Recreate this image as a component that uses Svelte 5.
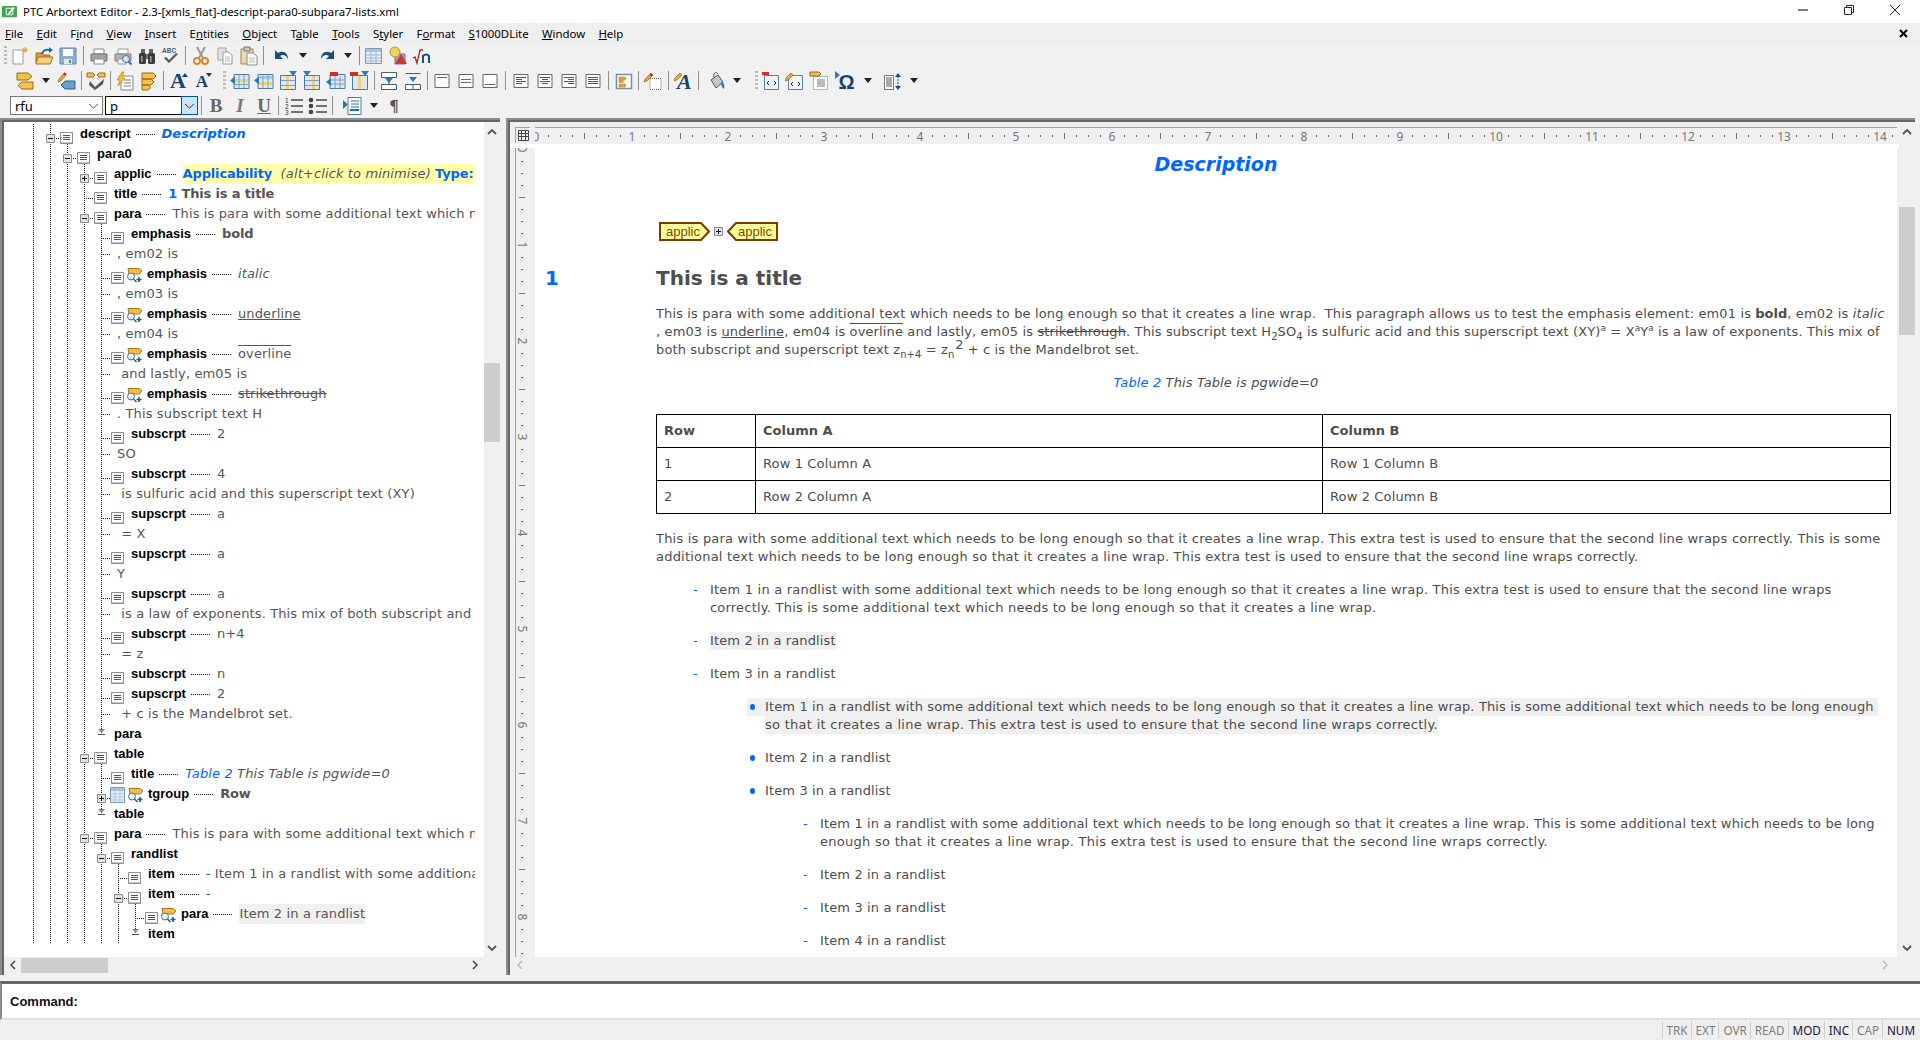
<script>
	// Arbortext Editor main window: document map on the left, edit view on the right
	const menus = [
		['F', 'ile'], ['E', 'dit'], ['Fi', 'nd', 'n'], ['V', 'iew'], ['I', 'nsert'], ['En', 'tities', 't'], ['O', 'bject'],
		['Ta', 'ble', 'b'], ['T', 'ools'], ['St', 'yler', 'y'], ['Fo', 'rmat', 'r'], ['S', '1000DLite'], ['W', 'indow'], ['H', 'elp']
	];

	const blue = 'blu';
	const tree = [
		{ l: 0, n: 'descript', e: 'm', v: [['Description', 'blu bi']] },
		{ l: 1, n: 'para0', e: 'm' },
		{ l: 2, n: 'applic', e: 'p', hi: true, v: [['Applicability', 'blu b'], ['  ', ''], ['(alt+click to minimise)', 'i'], [' ', ''], ['Type:', 'blu b']] },
		{ l: 2, n: 'title', v: [['1', 'blu b'], [' ', 'b'], ['This is a title', 'b']] },
		{ l: 2, n: 'para', e: 'm', v: [['This is para with some additional text which needs', '']] },
		{ l: 3, n: 'emphasis', v: [['bold', 'b']] },
		{ l: 3, t: ', em02 is' },
		{ l: 3, n: 'emphasis', tag: true, v: [['italic', 'i']] },
		{ l: 3, t: ', em03 is' },
		{ l: 3, n: 'emphasis', tag: true, v: [['underline', 'un']] },
		{ l: 3, t: ', em04 is' },
		{ l: 3, n: 'emphasis', tag: true, v: [['overline', 'ov']] },
		{ l: 3, t: ' and lastly, em05 is' },
		{ l: 3, n: 'emphasis', tag: true, v: [['strikethrough', 'st']] },
		{ l: 3, t: '. This subscript text H' },
		{ l: 3, n: 'subscrpt', v: [['2', '']] },
		{ l: 3, t: 'SO' },
		{ l: 3, n: 'subscrpt', v: [['4', '']] },
		{ l: 3, t: ' is sulfuric acid and this superscript text (XY)' },
		{ l: 3, n: 'supscrpt', v: [['a', '']] },
		{ l: 3, t: ' = X' },
		{ l: 3, n: 'supscrpt', v: [['a', '']] },
		{ l: 3, t: 'Y' },
		{ l: 3, n: 'supscrpt', v: [['a', '']] },
		{ l: 3, t: ' is a law of exponents. This mix of both subscript and' },
		{ l: 3, n: 'subscrpt', v: [['n+4', '']] },
		{ l: 3, t: ' = z' },
		{ l: 3, n: 'subscrpt', v: [['n', '']] },
		{ l: 3, n: 'supscrpt', v: [['2', '']] },
		{ l: 3, t: ' + c is the Mandelbrot set.' },
		{ l: 2, end: 'para' },
		{ l: 2, n: 'table', e: 'm' },
		{ l: 3, n: 'title', v: [['Table 2', 'blu i'], [' ', ''], ['This Table is pgwide=0', 'i']] },
		{ l: 3, n: 'tgroup', e: 'p', tbl: true, tag: true, v: [['Row', 'b']] },
		{ l: 2, end: 'table' },
		{ l: 2, n: 'para', e: 'm', v: [['This is para with some additional text which needs', '']] },
		{ l: 3, n: 'randlist', e: 'm' },
		{ l: 4, n: 'item', v: [['-', blue], [' Item 1 in a randlist with some additional text', '']] },
		{ l: 4, n: 'item', e: 'm', v: [['-', blue]] },
		{ l: 5, n: 'para', tag: true, v: [['Item 2 in a randlist', 'sel']] },
		{ l: 4, end: 'item' }
	];

	const status = [['TRK', 0], ['EXT', 0], ['OVR', 0], ['READ', 0], ['MOD', 1], ['INC', 1], ['CAP', 0], ['NUM', 1]];

	// eighth-inch ticks, 96px to the inch
	const hticks = Array.from({ length: 114 }, (_, k) => k);
	const vticks = Array.from({ length: 68 }, (_, k) => k);
</script>

{#snippet ico(name)}
	<svg class="ico" viewBox="0 0 20 20"><use href="#{name}" /></svg>
{/snippet}

{#snippet btn(name)}
	<span class="btn">{@render ico(name)}</span>
{/snippet}

{#snippet drop()}
	<span class="drop"><i></i></span>
{/snippet}

<svg class="defs" aria-hidden="true">
	<symbol id="new" viewBox="0 0 20 20"><path d="M3 4h10v14H3z" fill="#fff" stroke="#9a9a9a" /><path d="M4 17h9v1H4z" fill="#ccc" /><path d="M15 1v6M12 4h6M13 2l4 4M17 2l-4 4" stroke="#f39c1f" /></symbol>
	<symbol id="open" viewBox="0 0 20 20"><path d="M2 7h6l1 2h7v8H2z" fill="#d99a3a" stroke="#a8701c" /><path d="M4 11h15l-3 7H2z" fill="#f6cf7e" stroke="#a8701c" /><path d="M8 8c1-4 4-5 8-4" fill="none" stroke="#1e6aa6" stroke-width="2" /><path d="M15 1l4 3-4 3z" fill="#1e6aa6" /></symbol>
	<symbol id="save" viewBox="0 0 20 20"><path d="M2 2h16v16H2z" fill="#8badd6" stroke="#6585ad" /><path d="M5 3h10v7H5z" fill="#fff" /><path d="M6 13h8v5H6z" fill="#e3e8ee" /><path d="M11 14h2v3h-2z" fill="#55789f" /></symbol>
	<symbol id="print" viewBox="0 0 20 20"><path d="M5 3h10v5H5z" fill="#fff" stroke="#888" /><path d="M2 8h16v7H2z" fill="#a4a4a4" stroke="#6e6e6e" /><path d="M5 13h10v5H5z" fill="#fff" stroke="#888" /><path d="M15 10h2v1h-2z" fill="#3cb371" /></symbol>
	<symbol id="preview" viewBox="0 0 20 20"><path d="M5 3h10v5H5z" fill="#fff" stroke="#999" /><path d="M2 8h16v7H2z" fill="#b3b3b3" stroke="#808080" /><path d="M5 13h8v5H5z" fill="#fff" stroke="#999" /><circle cx="13" cy="13" r="3.500" fill="#d6e9f5" stroke="#4a6f8f" /><path d="M15.500 15.500l3 3" stroke="#4a6f8f" stroke-width="2" /></symbol>
	<symbol id="binoc" viewBox="0 0 20 20"><path d="M4 3h4v5H4zM12 3h4v5h-4z" fill="#5f5f5f" /><rect x="2" y="7" width="7" height="11" rx="1.500" fill="#3c3c3c" /><rect x="11" y="7" width="7" height="11" rx="1.500" fill="#3c3c3c" /><path d="M9 8h2v5H9z" fill="#777" /><path d="M4 10h1.500v6H4zM13 10h1.500v6H13z" fill="#a0a0a0" /></symbol>
	<symbol id="spell" viewBox="0 0 20 20"><text x="1" y="7" class="abc">ABC</text><path d="M3 12l5 5 9-9-2-1-7 7-3-3z" fill="#555" /></symbol>
	<symbol id="cut" viewBox="0 0 20 20"><path d="M6 1l6 11M14 1L8 12" stroke="#9a9a9a" stroke-width="2" /><circle cx="6" cy="15" r="3" fill="none" stroke="#d98a2b" stroke-width="2" /><circle cx="14" cy="15" r="3" fill="none" stroke="#d98a2b" stroke-width="2" /></symbol>
	<symbol id="copy" viewBox="0 0 20 20"><path d="M3 2h8v12H3z" fill="#e3e3e3" stroke="#a3a3a3" /><path d="M8 6h6l3 3v9H8z" fill="#fff" stroke="#9a9a9a" /><path d="M10 11h5M10 13h5M10 15h5" stroke="#bbb" /></symbol>
	<symbol id="paste" viewBox="0 0 20 20"><path d="M2 3h12v15H2z" fill="#eed7a8" stroke="#a28451" /><path d="M5 1h6v4H5z" fill="#c9c9c9" stroke="#777" /><path d="M8 7h6l4 3v9H8z" fill="#fff" stroke="#8a8a8a" /><path d="M10 12h6M10 14h6M10 16h6" stroke="#bbb" /></symbol>
	<symbol id="undo" viewBox="0 0 20 20"><path d="M3 4v9h8L8 10c3-2 6-1 8 3 0-6-5-9-10-6z" fill="#17507f" /></symbol>
	<symbol id="redo" viewBox="0 0 20 20"><path d="M17 4v9H9l3-3c-3-2-6-1-8 3 0-6 5-9 10-6z" fill="#17507f" /></symbol>
	<symbol id="table" viewBox="0 0 20 20"><path d="M1.500 2.500h16v15h-16z" fill="#e6eef7" stroke="#7a9ac0" /><path d="M2 3h15v3H2z" fill="#a9c3e0" /><path d="M2 9h15M2 12h15M2 15h15M7 6v11M12 6v11" stroke="#9fb7d3" /></symbol>
	<symbol id="obj" viewBox="0 0 20 20"><path d="M7 8h10v10H7z" fill="#a69ad0" stroke="#7d6fae" /><circle cx="7" cy="6" r="5" fill="#f3d25c" stroke="#b8942a" /><path d="M13 8l6 10H7z" fill="#cc3a2a" /></symbol>
	<symbol id="math" viewBox="0 0 20 20"><path d="M1 12l2-1 2 6 3-13h3" fill="none" stroke="#b3261e" stroke-width="1.300" /><path d="M11 9v8M11 10c2-2 6-2 6 1v6" fill="none" stroke="#17507f" stroke-width="2" /></symbol>

	<symbol id="tags" viewBox="0 0 20 20"><path d="M2 2h11l4 3.500-4 3.500H2z" fill="#f3c14f" stroke="#9a6a12" /><path d="M18 11H7l-4 3.500 4 3.500h11z" fill="#f3c14f" stroke="#9a6a12" /></symbol>
	<symbol id="tagedit" viewBox="0 0 20 20"><path d="M2 8l5-6 2 2-5 6-3 1z" fill="#e8a33d" stroke="#8a5a12" stroke-width=".6" /><path d="M7 2l2 2" stroke="#c22" stroke-width="2" /><path d="M18 10H8l-4 4 4 4h10z" fill="#6d9ecb" stroke="#2f5f8d" /></symbol>
	<symbol id="tagcheck" viewBox="0 0 20 20"><path d="M1 2h6l2 2-2 2H1zM19 2h-6l-2 2 2 2h6z" fill="#f3c14f" stroke="#9a6a12" /><path d="M4 10l5 6 9-8-1 5-8 6-6-5z" fill="#555" /></symbol>
	<symbol id="note" viewBox="0 0 20 20"><path d="M6 5h12v14H6z" fill="#fff" stroke="#888" /><path d="M9 9h7M9 12h7M9 15h7" stroke="#777" /><path d="M7 1L2 9h3l-2 6 7-8H7l2-6z" fill="#f6c22a" stroke="#a37a12" stroke-width=".6" /></symbol>
	<symbol id="tagorder" viewBox="0 0 20 20"><path d="M3 2h11l3 3-3 3H3zM3 8h9l3 3-3 3H3zM3 14h6l3 2.500-3 2.500H3z" fill="#f3c14f" stroke="#9a6a12" /></symbol>
	<symbol id="rowa" viewBox="0 0 20 20"><path d="M4 3.500h15v14H4z" fill="#dbe7f3" stroke="#4f7a9f" /><path d="M5 8h13v3H5z" fill="#f0cf7a" /><path d="M4 13.500h15M9 4v13M14 4v13" stroke="#7fa0bf" /><path d="M0 9.500l5-4v8z" fill="#2a7ab0" /></symbol>
	<symbol id="rowb" viewBox="0 0 20 20"><path d="M4 3.500h15v14H4z" fill="#dbe7f3" stroke="#4f7a9f" /><path d="M5 5h13v3H5z" fill="#a9c8e4" /><path d="M5 11h13v3H5z" fill="#f0cf7a" /><path d="M9 4v13M14 4v13" stroke="#7fa0bf" /><path d="M0 9.500l5-4v8z" fill="#2a7ab0" /></symbol>
	<symbol id="cola" viewBox="0 0 20 20"><path d="M2.500 4.500h15v14h-15z" fill="#dbe7f3" stroke="#4f7a9f" /><path d="M8 5h3v13H8z" fill="#f0cf7a" /><path d="M3 9.500h14M3 14.500h14" stroke="#7fa0bf" /><path d="M11 0h8l-4 5z" fill="#2a7ab0" /></symbol>
	<symbol id="colb" viewBox="0 0 20 20"><path d="M2.500 4.500h15v14h-15z" fill="#dbe7f3" stroke="#4f7a9f" /><path d="M10 5h3v13h-3z" fill="#f0cf7a" /><path d="M3 9.500h14M3 14.500h14" stroke="#7fa0bf" /><path d="M1 0h8L5 5z" fill="#2a7ab0" /></symbol>
	<symbol id="rowdel" viewBox="0 0 20 20"><path d="M4 3.500h15v14H4z" fill="#dbe7f3" stroke="#4f7a9f" /><path d="M4 1h8v4H4z" fill="#d62c20" /><path d="M5 9h13M5 13h13M9 5v12M14 5v12" stroke="#7fa0bf" /><path d="M0 11l5-4v8z" fill="#2a7ab0" /></symbol>
	<symbol id="coldel" viewBox="0 0 20 20"><path d="M2.500 4.500h15v14h-15z" fill="#dbe7f3" stroke="#4f7a9f" /><path d="M0 1h8v4H0z" fill="#d62c20" /><path d="M8 5h3v13H8z" fill="#f0cf7a" /><path d="M11 0h8l-4 5z" fill="#2a7ab0" /></symbol>
	<symbol id="splita" viewBox="0 0 20 20"><path d="M2.500 1.500h15v5h-15zM2.500 13.500h15v5h-15zM10 7v6" fill="#fff" stroke="#4a5f73" /><path d="M6 7h8l-4 5z" fill="#2a7ab0" /></symbol>
	<symbol id="splitb" viewBox="0 0 20 20"><path d="M2.500 2.500h15M2.500 13.500h15v5h-15zM10 13.500v5" fill="#fff" stroke="#4a5f73" /><path d="M6 6h8l-4 5z" fill="#2a7ab0" /></symbol>
	<symbol id="ftop" viewBox="0 0 20 20"><path d="M3 3.500h14v13H3z" fill="#fff" stroke="#666" /><path d="M5 6.500h10" stroke="#666" /></symbol>
	<symbol id="fmid" viewBox="0 0 20 20"><path d="M3 3.500h14v13H3z" fill="#fff" stroke="#666" /><path d="M5 8.500h10M5 11.500h10" stroke="#666" /></symbol>
	<symbol id="fbot" viewBox="0 0 20 20"><path d="M3 3.500h14v13H3z" fill="#fff" stroke="#666" /><path d="M5 13.500h10" stroke="#666" /></symbol>
	<symbol id="al" viewBox="0 0 20 20"><path d="M3 3.500h14v13H3z" fill="#fff" stroke="#666" /><path d="M5 6.500h10M5 8.500h6M5 10.500h10M5 12.500h6" stroke="#555" /></symbol>
	<symbol id="ac" viewBox="0 0 20 20"><path d="M3 3.500h14v13H3z" fill="#fff" stroke="#666" /><path d="M5 6.500h10M7 8.500h6M5 10.500h10M7 12.500h6" stroke="#555" /></symbol>
	<symbol id="ar" viewBox="0 0 20 20"><path d="M3 3.500h14v13H3z" fill="#fff" stroke="#666" /><path d="M5 6.500h10M9 8.500h6M5 10.500h10M9 12.500h6" stroke="#555" /></symbol>
	<symbol id="aj" viewBox="0 0 20 20"><path d="M3 3.500h14v13H3z" fill="#fff" stroke="#666" /><path d="M5 6.500h10M5 8.500h10M5 10.500h10M5 12.500h10" stroke="#555" /></symbol>
	<symbol id="order" viewBox="0 0 20 20"><path d="M2.500 3.500h15v14h-15z" fill="#fff" stroke="#7b8fa5" stroke-width="1.500" /><path d="M5 6h6l1 1.500-1 1.500H5zM5 9.500h4l1 1-1 1H5zM5 13h6l1 1-1 2H5z" fill="#e8a33d" stroke="#a8701c" stroke-width=".5" /></symbol>
	<symbol id="gridpen" viewBox="0 0 20 20"><path d="M7 7.500h11v11H7z" fill="#fff" stroke="#666" stroke-dasharray="1 1" /><path d="M2 8l6-6 2 2-6 6-3 1z" fill="#e8a33d" stroke="#8a5a12" stroke-width=".6" /><path d="M7 3l2 2" stroke="#c22" stroke-width="2" /></symbol>
	<symbol id="bucket" viewBox="0 0 20 20"><path d="M5 9l7-5 5 7-7 6z" fill="#c6c6c6" stroke="#555" /><path d="M8 6c-1-4 2-6 4-3" fill="none" stroke="#555" /><path d="M16 10c2 2 3 5 2 8-2-1-3-4-3-6z" fill="#3d7ca8" /></symbol>
	<symbol id="codedel" viewBox="0 0 20 20"><path d="M3.500 4.500h14v14h-14z" fill="#eef4fa" stroke="#5c7fa3" /><path d="M1 1h7v3H1z" fill="#d62c20" /><path d="M8 10l-2 2 2 2M13 10l2 2-2 2" fill="none" stroke="#222" /></symbol>
	<symbol id="codepen" viewBox="0 0 20 20"><path d="M3.500 4.500h14v14h-14z" fill="#eef4fa" stroke="#5c7fa3" /><path d="M1 7l5-5 2 2-5 5-3 1z" fill="#e8a33d" stroke="#8a5a12" stroke-width=".6" /><path d="M8 11l-2 2 2 2M13 11l2 2-2 2" fill="none" stroke="#222" /></symbol>
	<symbol id="tagbox" viewBox="0 0 20 20"><path d="M4.500 5.500h14v13h-14z" fill="#fff" stroke="#2a8ac0" stroke-dasharray="1 1" /><path d="M1 1h9l2 2-2 2H1z" fill="#f3c14f" stroke="#9a6a12" /><path d="M8 9h8M8 11h8M8 13h8M8 15h8" stroke="#777" /></symbol>
	<symbol id="linesp" viewBox="0 0 20 20"><path d="M1.500 4.500h9v14h-9z" fill="#fff" stroke="#777" /><path d="M3 7h6M3 9h6M3 11h6M3 13h6M3 15h6" stroke="#555" /><path d="M15 2l-3 4h6zM15 19l-3-4h6z" fill="#17507f" /><path d="M15 5v12" stroke="#17507f" stroke-dasharray="2 1" /></symbol>
	<symbol id="numlist" viewBox="0 0 20 20"><text x="1" y="7" class="tiny">1</text><text x="1" y="13" class="tiny">2</text><text x="1" y="19" class="tiny">3</text><path d="M7 4h12M7 10h12M7 16h12" stroke="#4a4a4a" stroke-width="1.600" /></symbol>
	<symbol id="bullist" viewBox="0 0 20 20"><circle cx="3" cy="4" r="2.300" fill="#444" /><circle cx="3" cy="10" r="2.300" fill="#444" /><circle cx="3" cy="16" r="2.300" fill="#444" /><path d="M8 4h11M8 10h11M8 16h11" stroke="#4a4a4a" stroke-width="1.600" /></symbol>
	<symbol id="indent" viewBox="0 0 20 20"><path d="M5 1.500h13v17H5z" fill="#fff" stroke="#4f7a9f" /><path d="M8 5h8M8 8h8M8 11h8" stroke="#2a6ea6" /><path d="M7 14h9" stroke="#2a6ea6" stroke-width="2" /><path d="M0 4l5 4.500-5 4.500z" fill="#2a7ab0" /></symbol>

	<symbol id="node" viewBox="0 0 13 12"><path d="M.5.500h12v11H.5z" fill="#fff" stroke="#8f8f8f" /><path d="M1 10h11v1H1z" fill="#c4c4c4" /><path d="M3 3.500h7M3 5.500h7M3 7.500h7" stroke="#2d5a8c" /></symbol>
	<symbol id="tagmag" viewBox="0 0 16 15"><path d="M2 .500h11l3 2.500-3 3H3z" fill="#f2bd4e" stroke="#a87418" /><circle cx="5" cy="8.500" r="3.500" fill="#e6eff6" stroke="#5a6f82" /><path d="M7.500 11l3 3" stroke="#4a5a68" stroke-width="1.500" /><path d="M13 9v5M10.500 11.500h5" stroke="#1c5a96" stroke-width="1.600" /></symbol>
	<symbol id="tblnode" viewBox="0 0 15 16"><path d="M.5.500h14v15H.5z" fill="#e6eef7" stroke="#7a9ac0" /><path d="M1 1h13v3H1z" fill="#a9c3e0" /><path d="M1 7h13M1 10h13M1 13h13M5 4v11M10 4v11" stroke="#b3c7de" /></symbol>
	<symbol id="expm" viewBox="0 0 9 9"><path d="M.5.500h8v8h-8z" fill="#e2e2e2" stroke="#8c8c8c" /><path d="M2 4.500h5" stroke="#111" /></symbol>
	<symbol id="expp" viewBox="0 0 9 9"><path d="M.5.500h8v8h-8z" fill="#e2e2e2" stroke="#8c8c8c" /><path d="M2 4.500h5M4.500 2v5" stroke="#111" /></symbol>
	<symbol id="endmark" viewBox="0 0 9 20"><path d="M4.500 0v9" stroke="#222" stroke-dasharray="1 1" /><path d="M1 5h7L4.500 9z" fill="#888" /><path d="M1 10.500h7" stroke="#555" /></symbol>
</svg>

<div class="app">
	<header class="titlebar">
		<svg class="appicon" viewBox="0 0 16 16"><path d="M1 2h14l1 1v10l-1 1H1l-1-1V3z" fill="#3da84a" /><path d="M4.500 4.500h7v7h-7z" fill="none" stroke="#fff" /><path d="M7 9l5-6 1.500 1.500-5 6-2 .5z" fill="#fff" /></svg>
		<span class="wintitle">PTC Arbortext Editor - 2.3-[xmls_flat]-descript-para0-subpara7-lists.xml</span>
		<div class="winbtns">
			<span class="winbtn"><svg width="12" height="12" viewBox="0 0 12 12"><path d="M1 6h10" stroke="#000" /></svg></span>
			<span class="winbtn"><svg width="12" height="12" viewBox="0 0 12 12"><path d="M1.500 3.500h7v7h-7zM3.500 3.500v-2h7v7h-2" fill="none" stroke="#222" /></svg></span>
			<span class="winbtn"><svg width="12" height="12" viewBox="0 0 12 12"><path d="M1 1l10 10M11 1L1 11" stroke="#222" /></svg></span>
		</div>
	</header>

	<nav class="menubar">
		{#each menus as m}
			<span class="menu">{#if m[2]}{m[0].slice(0, -1)}<u>{m[0].slice(-1)}</u>{m[1]}{:else}<u>{m[0]}</u>{m[1]}{/if}</span>
		{/each}
		<svg class="mdiclose" width="9" height="9" viewBox="0 0 9 9"><path d="M1 1l7 7M8 1L1 8" stroke="#000" stroke-width="2" /></svg>
	</nav>

	<div class="toolbars">
		<div class="tb">
			<i class="grip"></i>
			<span class="first1"></span>
			{@render btn('new')}{@render btn('open')}{@render btn('save')}
			<i class="sep"></i>
			{@render btn('print')}{@render btn('preview')}{@render btn('binoc')}{@render btn('spell')}
			<i class="sep narrow"></i>
			{@render btn('cut')}{@render btn('copy')}{@render btn('paste')}
			<i class="sep narrow"></i>
			<span class="pad3"></span>{@render btn('undo')}{@render drop()}<span class="pad3"></span>{@render btn('redo')}{@render drop()}
			<i class="sep tight"></i>
			{@render btn('table')}{@render btn('obj')}{@render btn('math')}
		</div>
		<div class="tb">
			<span class="first2"></span>
			{@render btn('tags')}{@render drop()}{@render btn('tagedit')}
			<i class="sep tight"></i>
			{@render btn('tagcheck')}
			<i class="sep tight"></i>
			{@render btn('note')}{@render btn('tagorder')}
			<i class="sep tight"></i>
			<span class="btn big"><span class="bigA">A</span><i class="up"></i></span>
			<span class="btn big"><span class="smallA">A</span><i class="dn"></i></span>
			<i class="grip mid"></i>
			{@render btn('rowa')}{@render btn('rowb')}{@render btn('cola')}{@render btn('colb')}{@render btn('rowdel')}{@render btn('coldel')}
			<i class="sep tight"></i>
			{@render btn('splita')}{@render btn('splitb')}
			<i class="sep tight"></i>
			{@render btn('ftop')}{@render btn('fmid')}{@render btn('fbot')}
			<i class="sep"></i>
			{@render btn('al')}{@render btn('ac')}{@render btn('ar')}{@render btn('aj')}
			<i class="sep"></i>
			{@render btn('order')}
			<i class="sep tight"></i>
			{@render btn('gridpen')}
			<i class="sep"></i>
			<span class="btn"><svg class="ico" viewBox="0 0 20 20"><path d="M1 7l5-5 2 2-5 5-3 1z" fill="#e8a33d" stroke="#8a5a12" stroke-width=".6" /></svg><span class="scriptA">A</span></span>
			<i class="sep tight"></i>
			<span class="pad3"></span>{@render btn('bucket')}{@render drop()}
			<i class="grip mid2"></i>
			{@render btn('codedel')}{@render btn('codepen')}{@render btn('tagbox')}
			<span class="btn omega"><i class="omtri"></i>Ω</span><span class="drop omdrop"><i></i></span>
			<span class="pad2"></span>{@render btn('linesp')}{@render drop()}
		</div>
		<div class="tb">
			<span class="first3"></span>
			<span class="combo">rfu<svg class="chev" width="11" height="6" viewBox="0 0 11 6"><path d="M1 1l4.500 4L10 1" fill="none" stroke="#555" /></svg></span>
			<span class="combo focus"><span>p</span><span class="combobtn"><svg class="chev" width="11" height="6" viewBox="0 0 11 6"><path d="M1 1l4.500 4L10 1" fill="none" stroke="#333" /></svg></span></span>
			<i class="sep sel-sep"></i>
			<span class="btn fmt bold">B</span><span class="btn fmt ital">I</span><span class="btn fmt under">U</span>
			<i class="sep narrow"></i>
			{@render btn('numlist')}{@render btn('bullist')}
			<i class="sep narrow"></i>
			<span class="pad5"></span>{@render btn('indent')}{@render drop()}
			<span class="btn pil">¶</span>
		</div>
	</div>

	<div class="main">
		<section class="pane left">
			<div class="pane-in">
				<div class="split">
					<div class="tree">
						{#each tree as r}
							<div class="row">
								{#each Array(r.end ? r.l + 2 : r.l + 1) as _}<i class="guide"></i>{/each}
								{#if r.end}
									<svg class="endmark" width="9" height="20"><use href="#endmark" /></svg>
									<span class="name">{r.end}</span>
								{:else if r.t !== undefined}
									<i class="cell textcell"></i>
									<span class="txt">{r.t}</span>
								{:else}
									<span class="cell">
										{#if r.e}<svg class="exp" width="9" height="9"><use href={r.e === 'm' ? '#expm' : '#expp'} /></svg>{/if}
									</span>
									{#if r.tbl}
										<svg class="tblnode" width="15" height="16"><use href="#tblnode" /></svg>
									{:else}
										<svg class="node" width="13" height="12"><use href="#node" /></svg>
									{/if}
									{#if r.tag}<svg class="tagmag" width="16" height="15"><use href="#tagmag" /></svg>{/if}
									<span class="name" class:tagged={r.tag}>{r.n}</span>
									{#if r.v}
										<i class="lead"></i>
										<span class="vals" class:hi={r.hi}>{#each r.v as [text, cls]}<span class={cls}>{text}</span>{/each}</span>
									{/if}
								{/if}
							</div>
						{/each}
					</div>
					<div class="vscroll tree-v">
						<svg class="arrow" width="10" height="6" viewBox="0 0 10 6"><path d="M1 5l4-4 4 4" fill="none" stroke="#555" stroke-width="1.800" /></svg>
						<span class="thumb"></span>
						<svg class="arrow" width="10" height="6" viewBox="0 0 10 6"><path d="M1 1l4 4 4-4" fill="none" stroke="#555" stroke-width="1.800" /></svg>
					</div>
				</div>
				<div class="hscroll">
					<svg class="arrow" width="6" height="10" viewBox="0 0 6 10"><path d="M5 1L1 5l4 4" fill="none" stroke="#444" stroke-width="1.500" /></svg>
					<span class="hthumb"></span>
					<svg class="arrow" width="6" height="10" viewBox="0 0 6 10"><path d="M1 1l4 4-4 4" fill="none" stroke="#444" stroke-width="1.500" /></svg>
				</div>
			</div>
		</section>

		<section class="pane right">
			<div class="pane-in">
				<div class="split">
					<div class="editor">
						<div class="rulerrow">
							<span class="gridbtn"><svg width="13" height="13" viewBox="0 0 13 13"><path d="M1.500 1.500h10v10h-10zM1.500 4.500h10M1.500 7.500h10M4.500 1.500v10M8.500 1.500v10" fill="none" stroke="#444" /></svg></span>
							<svg class="hruler" height="16">
								{#each hticks as k}
									{#if k % 8 === 0}
										<text x={1 + k * 12} y="13" text-anchor="middle" class="rnum">{k / 8}</text>
									{:else if k % 4 === 0}
										<rect x={1 + k * 12} y="5" width="1" height="6" fill="#777" />
									{:else}
										<rect x={1 + k * 12} y="7" width="1" height="2" fill="#666" />
									{/if}
								{/each}
							</svg>
						</div>
						<div class="body">
							<svg class="vruler" width="15">
								{#each vticks as k}
									{#if k % 8 === 0}
										<text transform="translate(2 {1 + k * 12}) rotate(90)" text-anchor="middle" class="rnum">{k / 8}</text>
									{:else if k % 4 === 0}
										<rect x="3" y={1 + k * 12} width="6" height="1" fill="#777" />
									{:else}
										<rect x="5" y={1 + k * 12} width="2" height="1" fill="#666" />
									{/if}
								{/each}
							</svg>
							<article class="doc">
								<h1>Description</h1>
								<div class="applic">
									<svg width="51" height="19" viewBox="0 0 51 19"><path d="M1 1h41l8 8.500-8 8.500H1z" fill="#ffff9c" stroke="#7a3b00" stroke-width="2" /><text x="7" y="14" class="tagtext">applic</text></svg>
									<svg class="tagexp" width="9" height="9"><use href="#expp" /></svg>
									<svg width="51" height="19" viewBox="0 0 51 19"><path d="M50 1H9l-8 8.500L9 18h41z" fill="#ffff9c" stroke="#7a3b00" stroke-width="2" /><text x="11" y="14" class="tagtext">applic</text></svg>
								</div>
								<h2><span class="num">1</span>This is a title</h2>
								<p>This is para with some additional text which needs to be long enough so that it creates a line wrap.&nbsp; This paragraph allows us to test the emphasis element: em01 is <b>bold</b>, em02 is <em>italic</em><br />, em03 is <u>underline</u>, em04 is <span class="ov">overline</span> and lastly, em05 is <s>strikethrough</s>. This subscript text H<sub>2</sub>SO<sub>4</sub> is sulfuric acid and this superscript text (XY)<sup>a</sup> = X<sup>a</sup>Y<sup>a</sup> is a law of exponents. This mix of<br />both subscript and superscript text z<sub>n+4</sub> = z<sub>n</sub><sup class="big2">2</sup> + c is the Mandelbrot set.</p>
								<div class="caption"><span class="capblue">Table 2</span> This Table is pgwide=0</div>
								<table>
									<colgroup><col class="c1" /><col class="c2" /><col /></colgroup>
									<thead><tr><th>Row</th><th>Column A</th><th>Column B</th></tr></thead>
									<tbody>
										<tr><td>1</td><td>Row 1 Column A</td><td>Row 1 Column B</td></tr>
										<tr><td>2</td><td>Row 2 Column A</td><td>Row 2 Column B</td></tr>
									</tbody>
								</table>
								<p class="p2 wide">This is para with some additional text which needs to be long enough so that it creates a line wrap. This extra test is used to ensure that the second line wraps correctly. This is some<br />additional text which needs to be long enough so that it creates a line wrap. This extra test is used to ensure that the second line wraps correctly.</p>

								<div class="item l1"><span class="mk">-</span><div class="wide">Item 1 in a randlist with some additional text which needs to be long enough so that it creates a line wrap. This extra test is used to ensure that the second line wraps<br />correctly. This is some additional text which needs to be long enough so that it creates a line wrap.</div></div>
								<div class="item l1"><span class="mk">-</span><div><span class="selline">Item 2 in a randlist</span></div></div>
								<div class="item l1"><span class="mk">-</span><div>Item 3 in a randlist</div></div>

								<div class="item l2"><span class="mk dot on"><i></i></span><div><span class="selline end">Item 1 in a randlist with some additional text which needs to be long enough so that it creates a line wrap. This is some additional text which needs to be long enough</span><br /><span class="selline wider">so that it creates a line wrap. This extra test is used to ensure that the second line wraps correctly.</span></div></div>
								<div class="item l2"><span class="mk dot"><i></i></span><div>Item 2 in a randlist</div></div>
								<div class="item l2"><span class="mk dot"><i></i></span><div>Item 3 in a randlist</div></div>

								<div class="item l3"><span class="mk">-</span><div>Item 1 in a randlist with some additional text which needs to be long enough so that it creates a line wrap. This is some additional text which needs to be long<br /><span class="wider">enough so that it creates a line wrap. This extra test is used to ensure that the second line wraps correctly.</span></div></div>
								<div class="item l3"><span class="mk">-</span><div>Item 2 in a randlist</div></div>
								<div class="item l3"><span class="mk">-</span><div>Item 3 in a randlist</div></div>
								<div class="item l3"><span class="mk">-</span><div>Item 4 in a randlist</div></div>
							</article>
						</div>
					</div>
					<div class="vscroll doc-v">
						<svg class="arrow" width="10" height="6" viewBox="0 0 10 6"><path d="M1 5l4-4 4 4" fill="none" stroke="#555" stroke-width="1.800" /></svg>
						<span class="thumb"></span>
						<svg class="arrow" width="10" height="6" viewBox="0 0 10 6"><path d="M1 1l4 4 4-4" fill="none" stroke="#555" stroke-width="1.800" /></svg>
					</div>
				</div>
				<div class="hscroll dim">
					<svg class="arrow" width="6" height="10" viewBox="0 0 6 10"><path d="M5 1L1 5l4 4" fill="none" stroke="#bbb" stroke-width="1.500" /></svg>
					<svg class="arrow" width="6" height="10" viewBox="0 0 6 10"><path d="M1 1l4 4-4 4" fill="none" stroke="#bbb" stroke-width="1.500" /></svg>
				</div>
			</div>
		</section>
	</div>

	<div class="command"><b>Command:</b></div>

	<footer class="status">
		{#each status as [label, active]}
			<span class:active>{label}</span>
		{/each}
	</footer>
</div>

<style>
	:global(body) {
		margin: 0;
		overflow: hidden;
	}

	.defs {
		display: block;
		width: 0;
		height: 0;
	}

	.app {
		display: flex;
		flex-direction: column;
		width: 1920px;
		height: 1040px;
		background: #f1f1f1;
		font-family: "Noto Sans", "Open Sans", sans-serif;
		font-size: 11.400px;
		color: #000;
		overflow: hidden;
	}

	.titlebar {
		display: flex;
		align-items: center;
		height: 23px;
		background: #fff;
		flex: none;
	}

	.appicon {
		width: 15px;
		height: 15px;
		margin: 0 6px 0 2px;
	}

	.winbtns {
		display: flex;
		align-self: flex-start;
		margin-left: auto;
		margin-right: 2px;
	}

	.winbtn {
		display: flex;
		align-items: center;
		justify-content: center;
		width: 46px;
		height: 20px;
	}

	.menubar {
		display: flex;
		align-items: center;
		gap: 13.300px;
		height: 20px;
		padding: 0 12px 0 5px;
		background: #efefef;
		flex: none;
	}

	.mdiclose {
		margin-left: auto;
	}

	.toolbars {
		flex: none;
		height: 75px;
	}

	.tb {
		display: flex;
		align-items: center;
		height: 25px;
	}

	.grip {
		width: 3px;
		height: 20px;
		margin-left: 4px;
		background: repeating-linear-gradient(#bbb 0 2px, transparent 2px 4px);
		flex: none;
	}

	.grip.mid { margin: 0 2px 0 9px; }
	.grip.mid2 { margin: 0 1px 0 9px; }

	.first1 { width: 1px; }
	.first2 { width: 13px; }
	.first3 { width: 10px; }
	.pad2 { width: 2px; }
	.pad3 { width: 3px; }
	.pad5 { width: 5px; }

	.btn {
		display: flex;
		align-items: center;
		justify-content: center;
		width: 24px;
		height: 22px;
		flex: none;
		position: relative;
	}

	.ico {
		width: 20px;
		height: 20px;
	}

	.sep {
		width: 1px;
		height: 19px;
		background: #8f8f8f;
		margin: 0 3px;
		flex: none;
	}

	.sep.narrow { margin: 0 3px 0 2px; }
	.sep.tight { margin: 0 2px; }

	.drop {
		display: flex;
		align-items: center;
		justify-content: center;
		width: 18px;
		height: 22px;
		flex: none;
	}

	.drop.omdrop {
		margin-left: -2px;
		margin-right: 2px;
	}

	.drop i {
		border-left: 4.500px solid transparent;
		border-right: 4.500px solid transparent;
		border-top: 5px solid #222;
	}

	.abc {
		font: bold 6.500px "Liberation Sans", sans-serif;
		fill: #3c5c80;
	}

	.tiny {
		font: 6.500px "Liberation Sans", sans-serif;
		fill: #333;
	}

	.bigA, .smallA {
		font-family: "Liberation Serif", serif;
		font-weight: bold;
		color: #17426e;
		line-height: 22px;
	}

	.bigA { font-size: 22px; }
	.smallA { font-size: 17px; margin-top: 3px; }

	.up, .dn {
		position: absolute;
		right: 2px;
		top: 3px;
		border-left: 3px solid transparent;
		border-right: 3px solid transparent;
	}

	.up { border-bottom: 4px solid #17426e; }
	.dn { border-top: 4px solid #17426e; }

	.scriptA {
		position: absolute;
		left: 5px;
		top: -1px;
		font: italic bold 22px "Liberation Serif", serif;
		color: #17426e;
	}

	.omega {
		font: bold 20px "Liberation Sans", sans-serif;
		color: #17426e;
		padding-top: 3px;
		box-sizing: border-box;
		width: 29px;
		margin-left: 1px;
	}

	.omtri {
		position: absolute;
		left: 3px;
		top: 1px;
		border-top: 4px solid transparent;
		border-bottom: 4px solid transparent;
		border-left: 5px solid #2a7ab0;
	}

	.combo {
		display: flex;
		align-items: center;
		justify-content: space-between;
		box-sizing: border-box;
		width: 93px;
		height: 19px;
		padding-left: 4px;
		background: #fff;
		border: 1px solid #7a7a7a;
		font-size: 13px;
		flex: none;
	}

	.combo > .chev { margin-right: 3px; }

	.combo.focus {
		margin-left: 2px;
		border-color: #000;
	}

	.combobtn {
		display: flex;
		align-items: center;
		justify-content: center;
		width: 17px;
		height: 19px;
		margin-right: -1px;
		box-sizing: border-box;
		background: #cce4f7;
		border: 1px solid #005499;
	}

	.sel-sep { margin-left: 3px; margin-right: 2px; }

	.fmt {
		font-family: "Liberation Serif", serif;
		font-size: 19px;
		color: #666;
	}

	.bold { font-weight: bold; }
	.ital { font-style: italic; font-weight: bold; color: #777; }
	.under { text-decoration: underline; font-weight: bold; }

	.pil {
		font: bold 17px "Liberation Serif", serif;
		color: #555;
		margin-left: -1px;
	}

	.main {
		display: flex;
		height: 857px;
		flex: none;
	}

	.pane {
		box-sizing: border-box;
		height: 857px;
		border-top: 2px solid #8c8c8c;
		border-left: 2px solid #8c8c8c;
		flex: none;
	}

	.pane.left {
		width: 500px;
	}

	.pane.right {
		width: 1409px;
		margin-left: 6px;
	}

	.pane-in {
		display: flex;
		flex-direction: column;
		height: 100%;
		box-sizing: border-box;
		border-top: 2px solid #666;
		border-left: 2px solid #666;
	}

	.split {
		display: flex;
		flex: 1;
		min-height: 0;
	}

	.tree {
		width: 480px;
		height: 836px;
		padding-top: 2px;
		box-sizing: border-box;
		background: #fff;
		overflow: hidden;
		font-family: "DejaVu Sans", Verdana, sans-serif;
		font-size: 13px;
		letter-spacing: 0.130px;
		color: #555;
		flex: none;
	}

	.row {
		display: flex;
		align-items: flex-start;
		width: 471px;
		height: 20px;
		padding-left: 29px;
		box-sizing: border-box;
		overflow: hidden;
		line-height: 20px;
		white-space: pre;
	}

	.guide {
		width: 17px;
		height: 20px;
		flex: none;
		background: repeating-linear-gradient(#111 0 1px, transparent 1px 2px) left / 1px 100% no-repeat;
	}

	.cell {
		display: block;
		width: 10px;
		height: 20px;
		flex: none;
		background:
			repeating-linear-gradient(#111 0 1px, transparent 1px 2px) left / 1px 100% no-repeat,
			repeating-linear-gradient(90deg, #111 0 1px, transparent 1px 2px) left 14px / 100% 1px no-repeat;
	}

	.textcell {
		background:
			repeating-linear-gradient(#111 0 1px, transparent 1px 2px) left / 1px 100% no-repeat,
			repeating-linear-gradient(90deg, #111 0 1px, transparent 1px 2px) left 10px / 100% 1px no-repeat;
	}

	.exp {
		display: block;
		margin: 10px 0 0 -4px;
	}

	.node {
		margin-top: 8px;
		flex: none;
	}

	.tblnode {
		margin: 3px 0 0 -1px;
		flex: none;
	}

	.tagmag {
		margin: 4px 0 0 2px;
		flex: none;
	}

	.endmark {
		margin-left: -4px;
		margin-right: 8px;
		flex: none;
	}

	.name {
		margin-left: 7px;
		font: bold 13px/20px "Liberation Sans", sans-serif;
		letter-spacing: 0;
		color: #000;
		flex: none;
	}

	.endmark + .name {
		margin-left: 0;
	}

	.name.tagged {
		margin-left: 5px;
	}

	.lead {
		width: 19px;
		height: 1px;
		margin: 10px 7px 0 5px;
		flex: none;
		background: repeating-linear-gradient(90deg, #111 0 1px, transparent 1px 2px);
	}

	.txt {
		margin-left: 6px;
	}

	.vals.hi {
		flex: 1;
		background: #ffffaa;
		height: 20px;
	}

	.blu { color: #0066ff; }
	.b { font-weight: bold; letter-spacing: -0.150px; }
	.i { font-style: italic; }
	.bi { font-weight: bold; font-style: italic; letter-spacing: 0; }
	.un { text-decoration: underline; }
	.ov { text-decoration: overline; }
	.st { text-decoration: line-through; }
	.sel { display: inline-block; background: #f0f0f0; height: 20px; }

	.vscroll {
		display: flex;
		flex-direction: column;
		align-items: center;
		width: 16px;
		background: #f0f0f0;
		flex: none;
		position: relative;
		padding: 7px 0 6px;
		box-sizing: border-box;
	}

	.vscroll .arrow:last-child {
		margin-top: auto;
	}

	.thumb {
		width: 16px;
		background: #cdcdcd;
	}

	.tree-v .thumb {
		height: 79px;
		margin-top: 228px;
	}

	.doc-v .thumb {
		height: 128px;
		margin-top: 72px;
	}

	.hscroll {
		display: flex;
		align-items: center;
		height: 16px;
		padding: 0 22px 0 6px;
		background: #f0f0f0;
		flex: none;
	}

	.hscroll.dim {
		justify-content: space-between;
		padding: 0 27px 0 7px;
	}

	.hthumb {
		width: 87px;
		height: 15px;
		margin-left: 5px;
		margin-right: auto;
		background: #cdcdcd;
	}

	.pane-in > .hscroll {
		margin-bottom: 2px;
	}

	.editor {
		width: 1389px;
		display: flex;
		flex-direction: column;
		flex: none;
	}

	.rulerrow {
		display: flex;
		align-items: flex-start;
		height: 26px;
		padding: 5px 2px 0 5px;
		box-sizing: border-box;
		background: linear-gradient(#f0f0f0 22px, #fff 22px);
		flex: none;
	}

	.gridbtn {
		display: flex;
		align-items: center;
		justify-content: center;
		width: 15px;
		height: 16px;
		border-top: 1px solid #a0a0a0;
		border-left: 1px solid #a0a0a0;
		box-sizing: border-box;
		flex: none;
	}

	.hruler {
		width: 1362px;
		margin-left: 5px;
		border-top: 1px solid #a0a0a0;
		background: #f0f0f0;
		flex: none;
	}

	.rnum {
		font: 12px "Noto Sans", sans-serif;
		fill: #777;
	}

	.body {
		display: flex;
		height: 809px;
		background: #f0f0f0;
	}

	.vruler {
		height: 809px;
		margin-left: 5px;
		border-left: 1px solid #a0a0a0;
		margin-right: 5px;
		box-sizing: border-box;
		flex: none;
	}

	.doc {
		width: 1362px;
		height: 809px;
		margin-left: 0;
		padding: 4px 5px 0 121px;
		box-sizing: border-box;
		background: #fff;
		overflow: hidden;
		font-family: "DejaVu Sans", Verdana, sans-serif;
		font-size: 13px;
		letter-spacing: 0.130px;
		line-height: 18px;
		color: #4d4d4d;
		flex: none;
	}

	h1 {
		margin: 0 -5px 0 -121px;
		font-size: 19px;
		line-height: 24px;
		font-style: italic;
		font-weight: bold;
		letter-spacing: 0;
		color: #0066ff;
		text-align: center;
	}

	.applic {
		display: flex;
		align-items: center;
		gap: 4px;
		margin: 46px 0 0 3px;
		height: 19px;
	}

	.applic svg {
		display: block;
		flex: none;
	}

	.tagtext {
		font: 13px "Liberation Sans", sans-serif;
		letter-spacing: 0;
		fill: #7a4b00;
	}

	h2 {
		display: flex;
		margin: 25px 0 0;
		font-size: 20px;
		line-height: 24px;
		font-weight: bold;
		letter-spacing: 0;
		color: #4d4d4d;
	}

	.num {
		width: 111px;
		margin-left: -111px;
		color: #0066ff;
		flex: none;
	}

	p {
		margin: 15px 0 0;
		white-space: nowrap;
	}

	b { font-weight: bold; letter-spacing: 0; }

	sub, sup {
		font-size: 10px;
		line-height: 0;
		letter-spacing: 0;
	}

	sup { font-size: 9px; }

	.big2 {
		font-size: 13px;
		margin-left: 1px;
	}

	.caption {
		margin: 15px -5px 0 -121px;
		text-align: center;
		font-style: italic;
	}

	.capblue {
		color: #0066ff;
	}

	table {
		width: 1235px;
		margin-top: 22px;
		border-collapse: collapse;
		table-layout: fixed;
	}

	.c1 { width: 99px; }
	.c2 { width: 567px; }

	th, td {
		height: 33px;
		padding: 0 7px;
		border: 1px solid #000;
		box-sizing: border-box;
		text-align: left;
		font-weight: normal;
	}

	th {
		font-weight: bold;
		letter-spacing: 0;
	}

	.p2 {
		margin-top: 16px;
	}

	.wide {
		letter-spacing: 0.210px;
	}

	.wider {
		letter-spacing: 0.280px;
	}

	.item {
		display: flex;
		margin-top: 15px;
		white-space: nowrap;
	}

	.mk {
		width: 17px;
		color: #0066ff;
		flex: none;
	}

	.l1 { margin-left: 37px; }
	.l2 { margin-left: 91px; }
	.l3 { margin-left: 147px; }

	.l2 .mk {
		width: 18px;
	}

	.dot {
		display: block;
		height: 18px;
	}

	.dot i {
		display: block;
		width: 5px;
		height: 6px;
		margin: 6px 0 0 3px;
		border-radius: 50%;
		background: #0066ff;
	}

	.dot.on {
		background: #f0f0f0;
	}

	.selline {
		display: inline-block;
		height: 18px;
		background: #f0f0f0;
	}

	.selline.end {
		padding-right: 4px;
	}

	.command {
		display: flex;
		align-items: center;
		box-sizing: border-box;
		height: 39px;
		margin-top: 6px;
		padding-left: 8px;
		background: #fff;
		border-top: 3px solid #666;
		border-left: 2px solid #888;
		border-bottom: 2px solid #e0e0e0;
		font: bold 13px "Liberation Sans", sans-serif;
		flex: none;
	}

	.command b {
		color: #111;
	}

	.status {
		display: flex;
		justify-content: flex-end;
		align-items: center;
		flex: 1;
		background: #efefef;
		padding-right: 2px;
		font-size: 11.700px;
		color: #7d7d7d;
	}

	.status span {
		padding: 0 3px 0 4px;
		border-left: 1px solid #cfcfcf;
		line-height: 18px;
	}

	.status .active {
		color: #14143c;
	}
</style>
